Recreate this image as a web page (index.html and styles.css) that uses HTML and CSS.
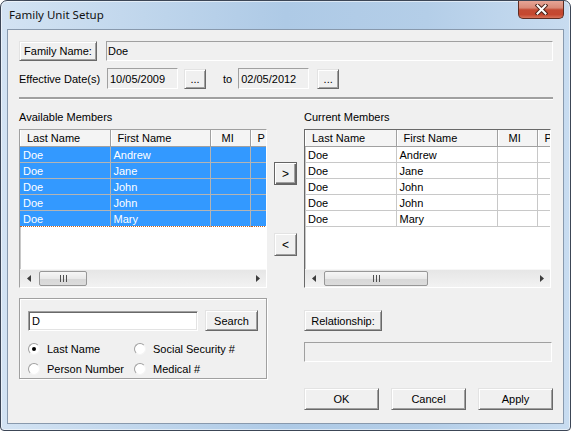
FILE: index.html
```html
<!DOCTYPE html>
<html lang="en">
<head>
    <meta charset="UTF-8">
    <title>Family Unit Setup</title>
    <link rel="stylesheet" href="styles.css">
</head>
<body>
    <div class="window">
        <div class="titlebar">
            <span class="title">Family Unit Setup</span>
            <div class="close-btn">
                <svg width="13" height="11" viewBox="0 0 13 11">
                    <path d="M2.5 1.5 L10.5 9.5 M10.5 1.5 L2.5 9.5" stroke="#4a2219" stroke-width="4" stroke-linecap="square"/>
                    <path d="M2.5 1.5 L10.5 9.5 M10.5 1.5 L2.5 9.5" stroke="#fff" stroke-width="2" stroke-linecap="square"/>
                </svg>
            </div>
        </div>

        <div class="client">
            <div class="name-row">
                <button class="btn name-btn">Family Name:</button>
                <div class="field name-field">Doe</div>
            </div>

            <div class="date-row">
                <span class="date-label">Effective Date(s)</span>
                <div class="field date-field">10/05/2009</div>
                <button class="btn dots">...</button>
                <span class="to">to</span>
                <div class="field date-field">02/05/2012</div>
                <button class="btn dots second">...</button>
            </div>

            <div class="separator"></div>

            <div class="members">
                <div class="caption">Available Members</div>
                <div></div>
                <div class="caption">Current Members</div>

                <div class="listview">
                    <div class="list-body">
                        <table class="grid selected">
                            <colgroup>
                                <col class="c-last"><col class="c-first"><col class="c-mi"><col class="c-p">
                            </colgroup>
                            <thead>
                                <tr><th>Last Name</th><th>First Name</th><th class="mi">MI</th><th>P</th></tr>
                            </thead>
                            <tbody>
                                <tr><td>Doe</td><td>Andrew</td><td></td><td></td></tr>
                                <tr><td>Doe</td><td>Jane</td><td></td><td></td></tr>
                                <tr><td>Doe</td><td>John</td><td></td><td></td></tr>
                                <tr><td>Doe</td><td>John</td><td></td><td></td></tr>
                                <tr class="focused"><td>Doe</td><td>Mary</td><td></td><td></td></tr>
                            </tbody>
                        </table>
                    </div>
                    <div class="hscroll">
                        <div class="arrow"><svg width="4" height="7" viewBox="0 0 4 7"><path d="M4 0 L0 3.5 L4 7Z" fill="#3c3c3c"/></svg></div>
                        <div class="track">
                            <div class="thumb thumb-left">
                                <svg width="8" height="7" viewBox="0 0 8 7"><path d="M1.5 0v7M4.5 0v7M7.5 0v7" stroke="#505050"/></svg>
                            </div>
                        </div>
                        <div class="arrow"><svg width="4" height="7" viewBox="0 0 4 7"><path d="M0 0 L4 3.5 L0 7Z" fill="#3c3c3c"/></svg></div>
                    </div>
                </div>

                <div class="movers">
                    <button class="btn mover default">&gt;</button>
                    <button class="btn mover">&lt;</button>
                </div>

                <div class="listview right-list">
                    <div class="list-body">
                        <table class="grid">
                            <colgroup>
                                <col class="c-last"><col class="c-first"><col class="c-mi"><col class="c-p">
                            </colgroup>
                            <thead>
                                <tr><th>Last Name</th><th>First Name</th><th class="mi">MI</th><th>P</th></tr>
                            </thead>
                            <tbody>
                                <tr><td>Doe</td><td>Andrew</td><td></td><td></td></tr>
                                <tr><td>Doe</td><td>Jane</td><td></td><td></td></tr>
                                <tr><td>Doe</td><td>John</td><td></td><td></td></tr>
                                <tr><td>Doe</td><td>John</td><td></td><td></td></tr>
                                <tr><td>Doe</td><td>Mary</td><td></td><td></td></tr>
                            </tbody>
                        </table>
                    </div>
                    <div class="hscroll">
                        <div class="arrow"><svg width="4" height="7" viewBox="0 0 4 7"><path d="M4 0 L0 3.5 L4 7Z" fill="#3c3c3c"/></svg></div>
                        <div class="track">
                            <div class="thumb thumb-right">
                                <svg width="8" height="7" viewBox="0 0 8 7"><path d="M1.5 0v7M4.5 0v7M7.5 0v7" stroke="#505050"/></svg>
                            </div>
                        </div>
                        <div class="arrow"><svg width="4" height="7" viewBox="0 0 4 7"><path d="M0 0 L4 3.5 L0 7Z" fill="#3c3c3c"/></svg></div>
                    </div>
                </div>
            </div>

            <div class="bottom">
                <div class="groupbox">
                    <div class="search-row">
                        <div class="search-input">D</div>
                        <button class="btn search-btn">Search</button>
                    </div>
                    <div class="radios">
                        <label class="radio"><span class="dot checked"></span>Last Name</label>
                        <label class="radio"><span class="dot"></span>Social Security #</label>
                        <label class="radio"><span class="dot"></span>Person Number</label>
                        <label class="radio"><span class="dot"></span>Medical #</label>
                    </div>
                </div>
                <div></div>
                <div class="relation">
                    <button class="btn rel-btn">Relationship:</button>
                    <div class="field rel-field"></div>
                    <div class="actions">
                        <button class="btn action">OK</button>
                        <button class="btn action">Cancel</button>
                        <button class="btn action">Apply</button>
                    </div>
                </div>
            </div>
        </div>
    </div>
</body>
</html>
```

FILE: styles.css
```css
body {
    margin: 0;
    font-family: "Liberation Sans", Arial, sans-serif;
    font-size: 11px;
    color: #000;
    background: #fff;
}

.window {
    width: 571px;
    height: 431px;
    box-sizing: border-box;
    border: 1px solid #3c4656;
    border-radius: 7px 7px 4px 4px;
    background: linear-gradient(90deg, #d3e3f3 0%, #c0d6ec 25%, #aecae6 50%, #b4cee8 75%, #c8dcf0 100%);
    box-shadow: inset 0 0 0 1px rgba(255, 255, 255, 0.55);
    display: flex;
    flex-direction: column;
    overflow: hidden;
}

.titlebar {
    height: 28px;
    display: flex;
    justify-content: space-between;
    align-items: flex-start;
    padding-left: 8px;
}

.title {
    font-family: "Noto Sans", "DejaVu Sans", sans-serif;
    font-size: 11.5px;
    color: #111;
    margin-top: 6px;
}

.close-btn {
    width: 46px;
    height: 18px;
    box-sizing: border-box;
    margin-right: 6px;
    border: 1px solid #5e2c22;
    border-top: none;
    border-radius: 0 0 5px 5px;
    background: linear-gradient(#e6a596 0%, #d98a78 40%, #c34a33 52%, #c5472f 80%, #d7735a 100%);
    display: flex;
    align-items: center;
    justify-content: center;
}

.client {
    flex: 1;
    margin: 0 6px 6px 6px;
    border: 1px solid #8899ad;
    background: #f0f0f0;
    padding: 11px 10px 0 11px;
}

/* classic controls */
.btn {
    font-family: "Liberation Sans", Arial, sans-serif;
    font-size: 11px;
    color: #000;
    background: #f0f0f0;
    border: 1px solid;
    border-color: #e3e3e3 #696969 #696969 #e3e3e3;
    box-shadow: inset 1px 1px #fff, inset -1px -1px #a0a0a0;
    padding: 0;
    margin: 0;
    box-sizing: border-box;
}

.btn.default {
    border-color: #646464;
    box-shadow: inset 1px 1px #fff, inset -1px -1px #696969, inset -2px -2px #a0a0a0;
}

.field {
    box-sizing: border-box;
    background: #f0f0f0;
    border: 1px solid;
    border-color: #a0a0a0 #fff #fff #a0a0a0;
    padding: 0 2px;
    display: flex;
    align-items: center;
}

.name-row {
    display: flex;
    height: 20px;
}

.name-btn {
    width: 78px;
    height: 20px;
    margin-right: 9px;
}

.name-field {
    flex: 1;
    height: 20px;
    padding-left: 1px;
}

.date-row {
    display: flex;
    align-items: center;
    height: 21px;
    margin-top: 7px;
}

.date-label {
    width: 88px;
}

.date-field {
    width: 71px;
    height: 21px;
}

.dots {
    width: 22px;
    height: 20px;
    margin-left: 6px;
}

.dots.second {
    margin-left: 8px;
}

.to {
    margin: 0 6px 0 17px;
}

.separator {
    margin-top: 8px;
    border-top: 2px solid #a0a0a0;
    border-bottom: 1px solid #fff;
}

/* member lists */
.members {
    margin-top: 11px;
    display: grid;
    grid-template-columns: 248px 37px 249px;
    grid-template-rows: 13px 159px;
    row-gap: 5px;
}

.caption {
    line-height: 13px;
}

.listview {
    box-sizing: border-box;
    height: 159px;
    border: 1px solid;
    border-color: #a0a0a0 #fff #fff #a0a0a0;
    box-shadow: inset 1px 1px #c8c8c8;
    background: #fff;
    display: flex;
    flex-direction: column;
    overflow: hidden;
}

.right-list {
    width: 247px;
    border-color: #696969 #fff #fff #696969;
}

.list-body {
    flex: 1;
    overflow: hidden;
}

.grid {
    table-layout: fixed;
    border-collapse: collapse;
    width: 291px;
}

.c-last { width: 90px; }
.c-first { width: 100px; }
.c-mi { width: 40px; }
.c-p { width: 61px; }

.right-list .c-last { width: 91px; }
.right-list .c-first { width: 101px; }

.grid th {
    height: 16px;
    padding: 0 0 0 7px;
    font-weight: normal;
    text-align: left;
    background: #f4f4f4;
    border-right: 1px solid #a0a0a0;
    border-bottom: 1px solid #a0a0a0;
    box-shadow: inset 1px 0 #fff;
    white-space: nowrap;
    overflow: hidden;
}

.grid th.mi {
    padding-left: 11px;
}

.grid td {
    height: 15px;
    padding: 0 0 0 3px;
    border-right: 1px solid #c8c8c8;
    border-bottom: 1px solid #c8c8c8;
    white-space: nowrap;
    overflow: hidden;
}

.grid.selected td {
    background: #3399ff;
    color: #fff;
    border-color: #b4b4b4;
}

.grid tr.focused td {
    border-top: 1px dotted #c86420;
    border-bottom: 1px dotted #c86420;
}

.hscroll {
    height: 17px;
    display: flex;
    background: linear-gradient(#e6e6e6, #f2f2f2);
    border-top: 1px solid #f7f7f7;
}

.arrow {
    width: 17px;
    display: flex;
    align-items: center;
    justify-content: center;
}

.track {
    flex: 1;
    display: flex;
    align-items: center;
}

.thumb {
    box-sizing: border-box;
    height: 15px;
    margin-left: 2px;
    border: 1px solid #979797;
    border-radius: 2px;
    background: linear-gradient(#f6f6f6 0%, #e9e9e9 50%, #d8d8d8 55%, #dcdcdc 100%);
    display: flex;
    align-items: center;
    justify-content: center;
}

.thumb-left { width: 48px; }
.thumb-right { width: 104px; }

.movers {
    display: flex;
    flex-direction: column;
    align-items: center;
    padding-top: 33px;
    gap: 48px;
}

.mover {
    width: 23px;
    height: 23px;
    font-size: 12px;
}

/* bottom area */
.bottom {
    margin-top: 10px;
    display: grid;
    grid-template-columns: 248px 37px 249px;
}

.groupbox {
    box-sizing: border-box;
    height: 81px;
    border: 1px solid #a0a0a0;
    box-shadow: inset 1px 1px #fff, 1px 1px #fff;
    padding: 11px 8px 0 8px;
}

.search-row {
    display: flex;
    align-items: center;
}

.search-input {
    box-sizing: border-box;
    width: 170px;
    height: 20px;
    background: #fff;
    border: 1px solid;
    border-color: #a0a0a0 #fff #fff #a0a0a0;
    box-shadow: inset 1px 1px #696969, inset -1px -1px #e3e3e3;
    padding: 0 3px;
    display: flex;
    align-items: center;
}

.search-btn {
    width: 53px;
    height: 21px;
    margin-left: 7px;
}

.radios {
    margin-top: 11px;
    display: grid;
    grid-template-columns: 106px 1fr;
    row-gap: 7px;
}

.radio {
    display: flex;
    align-items: center;
    height: 13px;
}

.dot {
    box-sizing: border-box;
    width: 12px;
    height: 12px;
    border-radius: 50%;
    border: 1px solid;
    border-color: #a0a0a0 #f4f4f4 #f4f4f4 #a0a0a0;
    background: #fff;
    margin-right: 7px;
    position: relative;
}

.dot.checked::after {
    content: "";
    position: absolute;
    left: 3px;
    top: 3px;
    width: 4px;
    height: 4px;
    border-radius: 50%;
    background: #000;
}

.relation {
    padding-top: 12px;
}

.rel-btn {
    width: 78px;
    height: 21px;
}

.rel-field {
    margin-top: 11px;
    width: 248px;
    height: 20px;
}

.actions {
    margin-top: 26px;
    display: flex;
    justify-content: space-between;
}

.action {
    width: 75px;
    height: 22px;
}
```
